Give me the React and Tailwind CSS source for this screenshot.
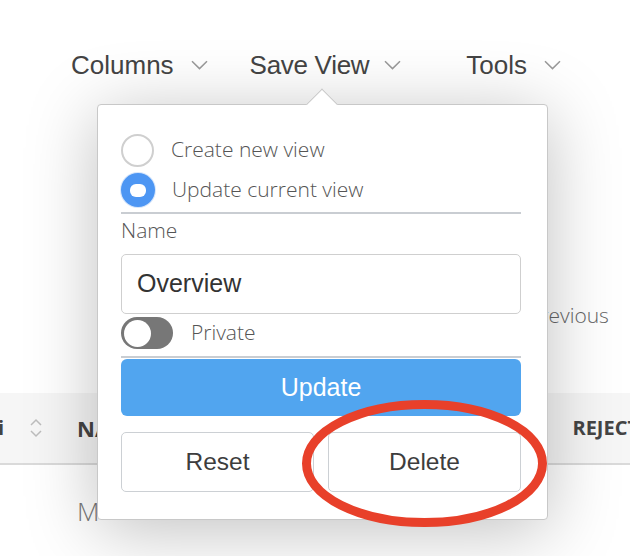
import React from 'react';

const SANS = "font-['Liberation_Sans',Arial,sans-serif]";
const OPEN = "font-['Open_Sans',sans-serif]";

function Chevron() {
  return (
    <svg width="17" height="10" viewBox="0 0 17 10" fill="none">
      <path d="M1 1.2 L8.5 8.6 L16 1.2" stroke="#9a9a9a" strokeWidth="1.5" />
    </svg>
  );
}

function SortIcon() {
  return (
    <svg width="14" height="22" viewBox="0 0 14 22" fill="none">
      <path d="M2 8 L7 3 L12 8" stroke="#bdbdbd" strokeWidth="1.5" />
      <path d="M2 14 L7 19 L12 14" stroke="#bdbdbd" strokeWidth="1.5" />
    </svg>
  );
}

function Radio({ checked, label }) {
  return (
    <div className="h-[40px] flex items-center">
      {checked ? (
        <div className="w-[34px] h-[34px] rounded-full bg-[#4d96f3] ring-1 ring-[#d6e6fb] flex items-center justify-center">
          <div className="w-[16px] h-[13px] rounded-[6px] bg-white" />
        </div>
      ) : (
        <div className="w-[33px] h-[33px] rounded-full border-2 border-[#cfcfcf] bg-white" />
      )}
      <span className={`${OPEN} font-light ml-[17px] text-[21px] text-[#555]`}>{label}</span>
    </div>
  );
}

function SaveViewPopover() {
  return (
    <div className="absolute z-10 left-[97px] top-[104px] w-[451px] bg-white border border-[#c8c8c8] rounded-[4px] shadow-[0_10px_70px_rgba(0,0,0,0.25)] pl-[23px] pr-[26px] pt-[25px] pb-[27px] flex flex-col">
      {/* arrow */}
      <div className="absolute top-[-12px] left-[213px] w-[22px] h-[22px] rotate-45 bg-white border-l border-t border-[#c8c8c8]" />

      <Radio label="Create new view" />
      <Radio checked label="Update current view" />
      <div className="mt-[2px] h-[2px] bg-[#c9cdd2]" />

      <div className={`${OPEN} font-light h-[34px] flex items-center text-[21px] text-[#555]`}>Name</div>
      <div className={`${SANS} mt-[6px] h-[60px] border-[1.5px] border-[#cfcfcf] rounded-[5px] pl-[15px] flex items-center text-[25px] text-[#333]`}>
        Overview
      </div>

      <div className="mt-[3px] h-[32px] flex items-center">
        <div className="w-[52px] h-[32px] rounded-full bg-[#777] flex items-center">
          <div className="w-[27px] h-[27px] rounded-full bg-white ml-[3px]" />
        </div>
        <span className={`${OPEN} font-light ml-[18px] text-[21px] text-[#555]`}>Private</span>
      </div>
      <div className="mt-[7px] h-[2px] bg-[#c9cdd2]" />

      <button className={`${SANS} mt-[1px] h-[57px] rounded-[6px] bg-[#51a5ef] text-white text-[25px]`}>
        Update
      </button>

      <div className="mt-[16px] flex gap-[14px]">
        <button className={`${SANS} flex-1 h-[60px] border-[1.5px] border-[#ccd0d4] rounded-[5px] bg-white text-[24.5px] text-[#3d3d3d]`}>
          Reset
        </button>
        <button className={`${SANS} flex-1 h-[60px] border-[1.5px] border-[#ccd0d4] rounded-[5px] bg-white text-[24.5px] text-[#3d3d3d]`}>
          Delete
        </button>
      </div>
    </div>
  );
}

export default function App() {
  return (
    <div className="relative w-[630px] h-[556px] overflow-hidden bg-white">
      {/* toolbar */}
      <div className={`${SANS} pt-[50px] h-[80px] pl-[71px] flex items-center text-[26px] text-[#444] whitespace-nowrap`}>
        <span className="h-[30px] leading-[30px]">Columns</span>
        <span className="ml-[17px]"><Chevron /></span>
        <span className="ml-[42px] h-[30px] leading-[30px] tracking-[-0.3px]">Save View</span>
        <span className="ml-[15px]"><Chevron /></span>
        <span className="ml-[65px] h-[30px] leading-[30px]">Tools</span>
        <span className="ml-[17px]"><Chevron /></span>
      </div>

      {/* page behind the popover */}
      <div className={`${OPEN} mt-[222px] h-[28px] pl-[528px] flex items-center font-light text-[21px] text-[#666] whitespace-nowrap`}>
        Previous
      </div>

      <div className={`${OPEN} mt-[63px] h-[72px] bg-[#f6f6f6] border-b-2 border-[#dadada] flex items-center font-bold text-[20px] text-[#444] whitespace-nowrap`}>
        <span className="ml-[-2px]">i</span>
        <span className="ml-[25px] flex"><SortIcon /></span>
        <span className="ml-[34px] text-[22px]">NAME</span>
        <span className="ml-auto mr-[-35px]">REJECTED</span>
      </div>

      <div className={`${OPEN} mt-[32px] h-[28px] pl-[77px] flex items-center font-light text-[26px] text-[#777] whitespace-nowrap`}>
        M
      </div>

      <SaveViewPopover />

      {/* annotation */}
      <svg className="absolute z-20 left-0 top-0 pointer-events-none" width="630" height="556">
        <ellipse cx="424.5" cy="463.5" rx="118" ry="59" fill="none" stroke="#e8402a" strokeWidth="9" />
      </svg>
    </div>
  );
}
